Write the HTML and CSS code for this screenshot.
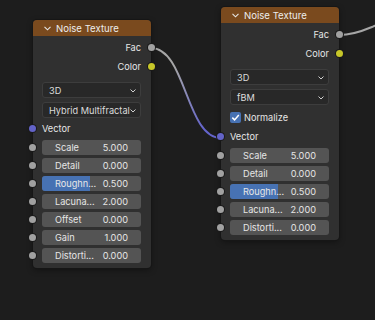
FILE: index.html
```html
<!DOCTYPE html>
<html lang="en">
<head>
    <meta charset="UTF-8">
    <title>Noise Texture</title>
    <link rel="stylesheet" href="styles.css">
</head>
<body>
<div class="editor">
    <svg class="wires" width="375" height="320">
        <defs>
            <linearGradient id="wire1" x1="151" y1="48" x2="221" y2="138" gradientUnits="userSpaceOnUse">
                <stop offset="0.25" stop-color="#a6a6a6"/>
                <stop offset="0.85" stop-color="#6464cc"/>
            </linearGradient>
        </defs>
        <path d="M151,48 C186,48 186,138 221,138" fill="none" stroke="url(#wire1)" stroke-width="2"/>
        <path d="M339,35 C366,35 392,16 430,-4" fill="none" stroke="#a6a6a6" stroke-width="2"/>
    </svg>

    <!-- first node -->
    <div class="node node-a">
        <div class="node-header">
            <svg class="chev" width="7" height="5"><polyline points="0.5,0.8 3.5,3.8 6.5,0.8" fill="none" stroke="#e6e6e6" stroke-width="1.1"/></svg>
            Noise Texture
        </div>
        <div class="node-body">
            <div class="out-row">Fac<span class="socket grey"></span></div>
            <div class="out-row">Color<span class="socket yellow"></span></div>
            <div class="dropdown first">3D<svg class="dd-chev" width="6" height="4"><polyline points="0.5,0.5 3,3 5.5,0.5" fill="none" stroke="#cfcfcf" stroke-width="1"/></svg></div>
            <div class="dropdown">Hybrid Multifractal<svg class="dd-chev" width="6" height="4"><polyline points="0.5,0.5 3,3 5.5,0.5" fill="none" stroke="#cfcfcf" stroke-width="1"/></svg></div>
            <div class="in-row">Vector<span class="socket purple"></span></div>
            <div class="fields">
                <div class="field"><span class="socket grey"></span><span class="lbl">Scale</span><span class="val">5.000</span></div>
                <div class="field"><span class="socket grey"></span><span class="lbl">Detail</span><span class="val">0.000</span></div>
                <div class="field"><span class="fill" style="width:48%"></span><span class="socket grey"></span><span class="lbl">Roughn...</span><span class="val">0.500</span></div>
                <div class="field"><span class="socket grey"></span><span class="lbl">Lacuna...</span><span class="val">2.000</span></div>
                <div class="field"><span class="socket grey"></span><span class="lbl">Offset</span><span class="val">0.000</span></div>
                <div class="field"><span class="socket grey"></span><span class="lbl">Gain</span><span class="val">1.000</span></div>
                <div class="field"><span class="socket grey"></span><span class="lbl">Distorti...</span><span class="val">0.000</span></div>
            </div>
        </div>
    </div>

    <!-- second node -->
    <div class="node node-b">
        <div class="node-header">
            <svg class="chev" width="7" height="5"><polyline points="0.5,0.8 3.5,3.8 6.5,0.8" fill="none" stroke="#e6e6e6" stroke-width="1.1"/></svg>
            Noise Texture
        </div>
        <div class="node-body">
            <div class="out-row">Fac<span class="socket grey"></span></div>
            <div class="out-row">Color<span class="socket yellow"></span></div>
            <div class="dropdown first">3D<svg class="dd-chev" width="6" height="4"><polyline points="0.5,0.5 3,3 5.5,0.5" fill="none" stroke="#cfcfcf" stroke-width="1"/></svg></div>
            <div class="dropdown">fBM<svg class="dd-chev" width="6" height="4"><polyline points="0.5,0.5 3,3 5.5,0.5" fill="none" stroke="#cfcfcf" stroke-width="1"/></svg></div>
            <div class="check-row">
                <span class="checkbox"><svg width="11" height="11"><polyline points="2.3,5.6 4.6,7.9 8.8,3" fill="none" stroke="#fff" stroke-width="1.5"/></svg></span>
                Normalize
            </div>
            <div class="in-row after-check">Vector<span class="socket purple"></span></div>
            <div class="fields">
                <div class="field"><span class="socket grey"></span><span class="lbl">Scale</span><span class="val">5.000</span></div>
                <div class="field"><span class="socket grey"></span><span class="lbl">Detail</span><span class="val">0.000</span></div>
                <div class="field"><span class="fill" style="width:48%"></span><span class="socket grey"></span><span class="lbl">Roughn...</span><span class="val">0.500</span></div>
                <div class="field"><span class="socket grey"></span><span class="lbl">Lacuna...</span><span class="val">2.000</span></div>
                <div class="field"><span class="socket grey"></span><span class="lbl">Distorti...</span><span class="val">0.000</span></div>
            </div>
        </div>
    </div>
</div>
</body>
</html>
```

FILE: styles.css
```css
body {
    margin: 0;
    background: #1d1d1d;
    font-family: Inter, "DejaVu Sans", sans-serif;
    font-size: 9.2px;
    color: #e6e6e6;
}
.editor {
    position: relative;
    width: 375px;
    height: 320px;
    overflow: hidden;
}
.wires {
    position: absolute;
    left: 0;
    top: 0;
}
.node {
    position: absolute;
    width: 118px;
    background: #303030;
    border-radius: 4px;
    box-shadow: 0 0 0 1px #161616, 0 2px 6px rgba(0, 0, 0, 0.4);
}
.node-a {
    left: 33px;
    top: 20px;
}
.node-b {
    left: 221px;
    top: 7px;
}
.node-header {
    height: 16px;
    background: #7a4a1e;
    border-radius: 4px 4px 0 0;
    display: flex;
    align-items: center;
    padding-left: 11px;
    gap: 5px;
    color: #ececec;
    font-size: 9.6px;
}
.chev {
    display: block;
}
.node-body {
    padding: 2px 0 5px;
}
.out-row {
    position: relative;
    height: 19px;
    display: flex;
    align-items: center;
    justify-content: flex-end;
    padding-right: 10px;
}
.out-row .socket {
    right: -4px;
}
.socket {
    position: absolute;
    top: 50%;
    width: 7px;
    height: 7px;
    margin-top: -3.5px;
    border-radius: 50%;
    box-shadow: 0 0 0 1px #1a1a1a;
}
.grey {
    background: #a1a1a1;
}
.yellow {
    background: #c7c729;
}
.purple {
    background: #6363c7;
}
.dropdown {
    position: relative;
    height: 16px;
    margin: 4px 10px 0 9px;
    box-sizing: border-box;
    background: #282828;
    border: 1px solid #3d3d3d;
    border-radius: 3px;
    display: flex;
    align-items: center;
    padding-left: 6px;
    color: #dcdcdc;
}
.dropdown.first {
    margin-top: 6px;
}
.dd-chev {
    position: absolute;
    right: 4px;
    top: 6px;
}
.check-row {
    height: 19px;
    margin-top: 3px;
    padding-left: 9px;
    display: flex;
    align-items: center;
    gap: 3px;
}
.checkbox {
    width: 11px;
    height: 11px;
    background: #4772b3;
    border-radius: 2px;
    display: block;
}
.checkbox svg {
    display: block;
}
.in-row {
    position: relative;
    height: 19px;
    margin-top: 1px;
    padding-left: 9px;
    display: flex;
    align-items: center;
}
.in-row.after-check {
    margin-top: 0;
}
.in-row .socket {
    left: -4px;
}
.fields {
    display: flex;
    flex-direction: column;
    gap: 3px;
    margin-top: 2px;
}
.field {
    position: relative;
    height: 15px;
    margin: 0 10px 0 9px;
    background: #545454;
    border-radius: 3px;
    display: flex;
    align-items: center;
    justify-content: space-between;
    padding: 0 13px;
    color: #e6e6e6;
}
.field .socket {
    left: -13px;
}
.fill {
    position: absolute;
    left: 0;
    top: 0;
    bottom: 0;
    background: #4772b3;
    border-radius: 3px 0 0 3px;
}
.lbl, .val {
    position: relative;
}
```
